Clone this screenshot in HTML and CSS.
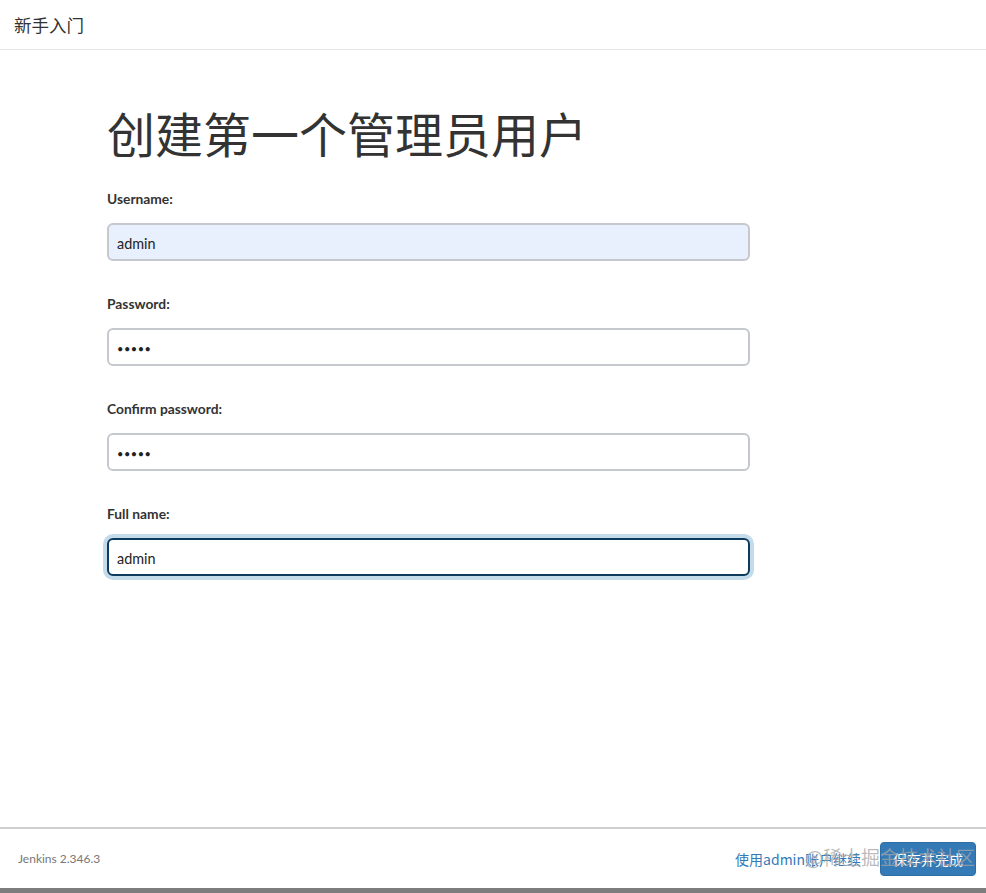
FILE: index.html
```html
<!DOCTYPE html>
<html lang="zh-CN">
<head>
<meta charset="utf-8">
<title>新手入门</title>
<link rel="stylesheet" href="styles.css">
</head>
<body>
<div class="page">
  <header class="top">新手入门</header>
  <main class="main">
    <h1 class="title">创建第一个管理员用户</h1>
    <form class="form">
      <div class="field">
        <label class="label">Username:</label>
        <input class="input autofill" type="text" value="admin">
      </div>
      <div class="field">
        <label class="label">Password:</label>
        <input class="input" type="password" value="admin">
      </div>
      <div class="field">
        <label class="label">Confirm password:</label>
        <input class="input" type="password" value="admin">
      </div>
      <div class="field">
        <label class="label">Full name:</label>
        <input class="input focused" type="text" value="admin">
      </div>
    </form>
  </main>
  <footer class="foot">
    <span class="version">Jenkins 2.346.3</span>
    <div class="actions">
      <a class="link" href="#">使用admin账户继续</a>
      <button class="btn" type="button">保存并完成</button>
    </div>
    <span class="watermark">@稀土掘金技术社区</span>
  </footer>
</div>
</body>
</html>
```

FILE: styles.css
```css
html, body {
  margin: 0;
  padding: 0;
  background: #fff;
}
body {
  font-family: Lato, "Noto Sans", "Noto Sans CJK SC", sans-serif;
  color: #333;
}
.page {
  height: 893px;
  display: flex;
  flex-direction: column;
  box-sizing: border-box;
  border-bottom: 5px solid #7d7d7d;
}
.top {
  height: 49px;
  border-bottom: 1px solid #e6e6e6;
  display: flex;
  align-items: center;
  padding-left: 14px;
  font-size: 17.5px;
  font-family: "Noto Sans CJK SC", sans-serif;
  color: #333;
}
.main {
  flex: 1;
  padding: 56px 0 0 107px;
}
.title {
  margin: 0;
  font-family: "Noto Sans CJK SC", sans-serif;
  font-weight: 400;
  font-size: 48px;
  line-height: 53px;
  color: #333;
}
.form {
  margin-top: 31px;
  width: 643px;
  display: flex;
  flex-direction: column;
  gap: 34px;
}
.field {
  display: flex;
  flex-direction: column;
  gap: 15px;
}
.label {
  font-size: 13.8px;
  line-height: 18px;
  font-weight: 700;
  color: #333;
}
.input {
  box-sizing: border-box;
  width: 643px;
  height: 38px;
  border: 2px solid #c5c8cd;
  border-radius: 6px;
  padding: 2px 8px 0;
  font-family: Lato, "Noto Sans", sans-serif;
  font-size: 14.4px;
  color: #222;
  background: #fff;
  outline: none;
}
.input[type="password"] {
  font-size: 11px;
  letter-spacing: 0.5px;
}
.input.autofill {
  background: #e8f0fe;
}
.input.focused {
  border-color: #0d3b5e;
  box-shadow: 0 0 0 4px #c4dbea;
}
.foot {
  position: relative;
  height: 59px;
  border-top: 2px solid #d0d0d0;
  display: flex;
  align-items: center;
  justify-content: space-between;
  padding: 0 10px 0 18px;
}
.version {
  font-size: 12px;
  color: #777;
}
.actions {
  display: flex;
  align-items: center;
  gap: 19px;
}
.link {
  font-family: "Noto Sans CJK SC", sans-serif;
  font-size: 14px;
  color: #337ab7;
  text-decoration: none;
}
.btn {
  font-family: "Noto Sans CJK SC", sans-serif;
  font-size: 14px;
  line-height: 20px;
  color: #fff;
  background: #337ab7;
  border: 1px solid #2e6da4;
  border-radius: 4px;
  padding: 6px 12px;
}
.watermark {
  position: absolute;
  z-index: 5;
  right: 11px;
  top: 14px;
  white-space: nowrap;
  font-family: "Noto Sans CJK SC", sans-serif;
  font-size: 19px;
  color: rgba(165, 165, 165, 0.75);
  pointer-events: none;
}
```
